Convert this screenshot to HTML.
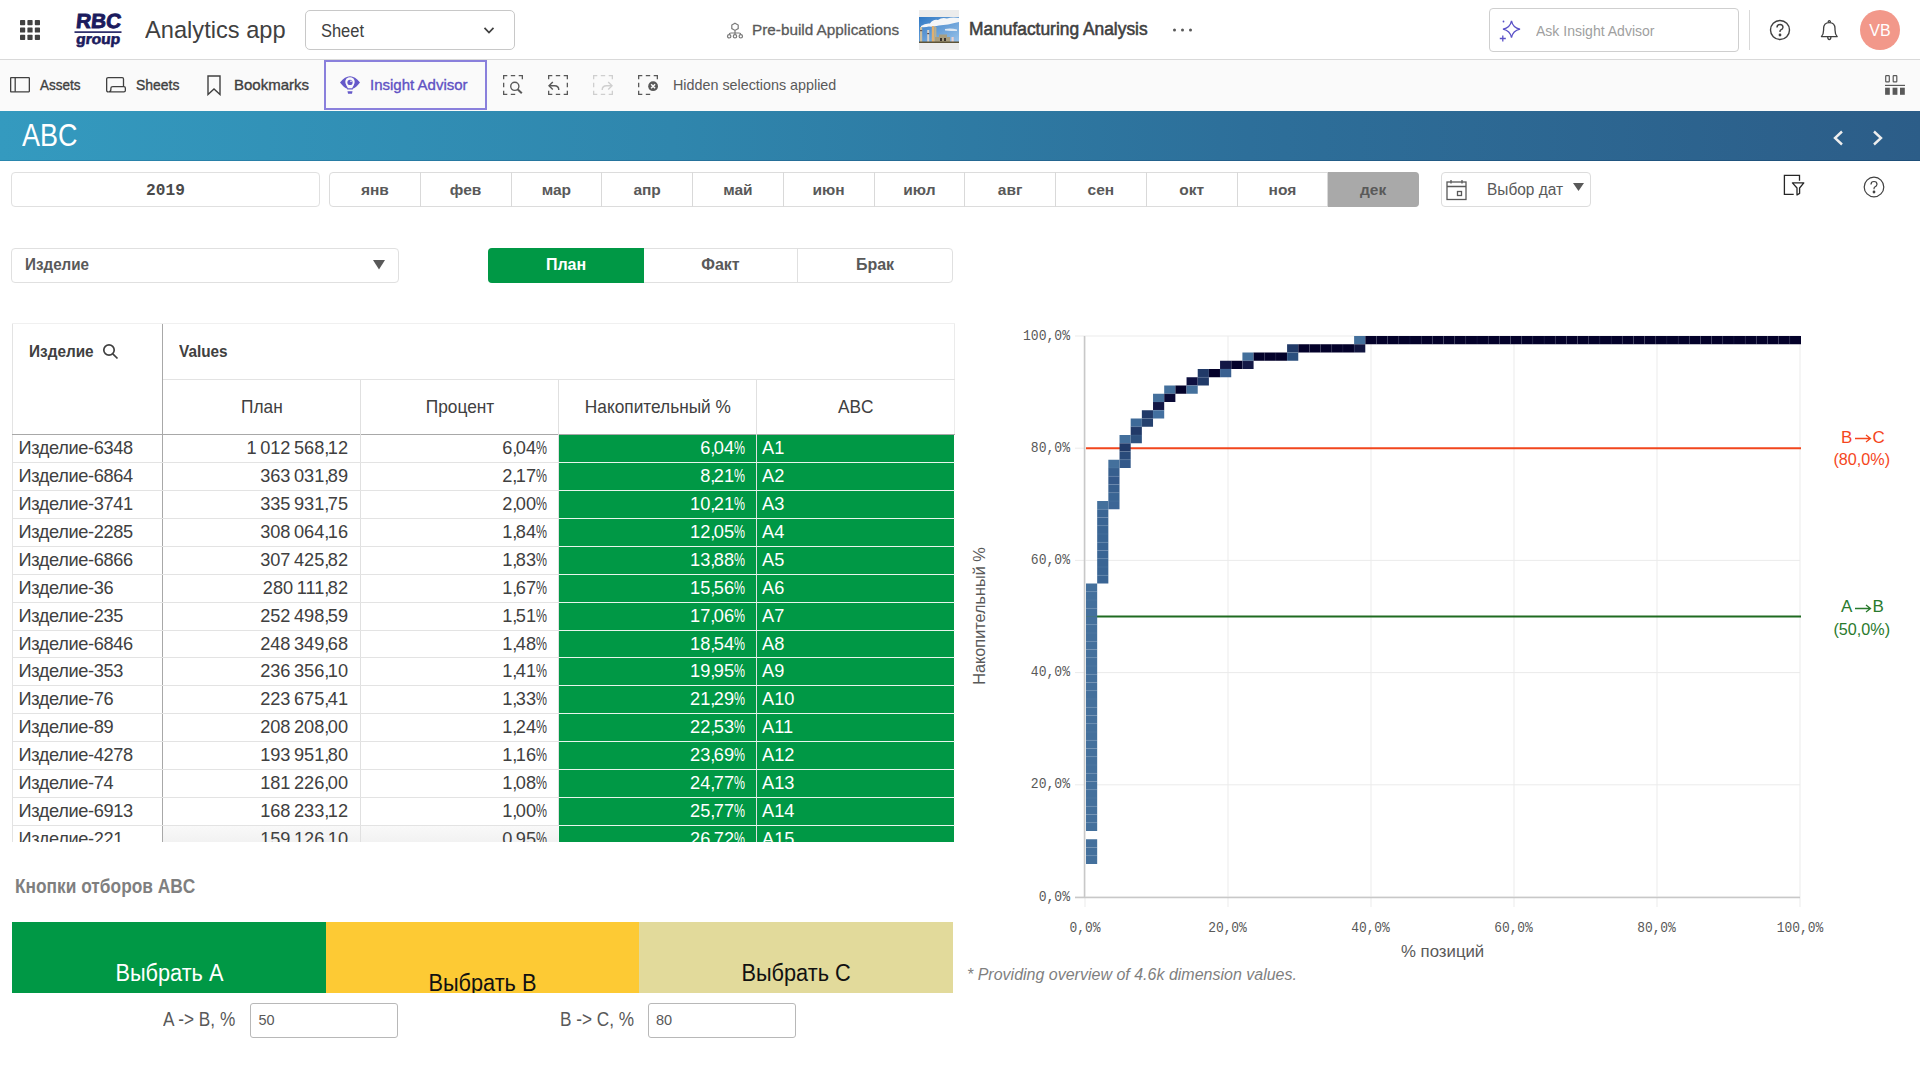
<!DOCTYPE html>
<html><head><meta charset="utf-8"><title>ABC</title>
<style>
*{box-sizing:border-box;margin:0;padding:0}
html,body{width:1920px;height:1080px;overflow:hidden;background:#fff;font-family:"Liberation Sans",sans-serif;color:#404040}
.abs{position:absolute}
#top{position:absolute;left:0;top:0;width:1920px;height:60px;background:#fff;border-bottom:1px solid #d9d9d9}
#tb{position:absolute;left:0;top:60px;width:1920px;height:51px;background:#fafafa}
#hdr{position:absolute;left:0;top:111px;width:1920px;height:50px;background:linear-gradient(90deg,#349abf 0%,#2f86ad 35%,#2d6f9a 65%,#2c5d88 100%);}
.t{position:absolute;white-space:nowrap}
</style></head><body>

<div id="top">
<svg class="abs" style="left:20px;top:20px" width="20" height="20" viewBox="0 0 20 20" fill="#404040">
<rect x="0.0" y="0.0" width="5.2" height="5.2" rx="0.7"/>
<rect x="7.4" y="0.0" width="5.2" height="5.2" rx="0.7"/>
<rect x="14.8" y="0.0" width="5.2" height="5.2" rx="0.7"/>
<rect x="0.0" y="7.4" width="5.2" height="5.2" rx="0.7"/>
<rect x="7.4" y="7.4" width="5.2" height="5.2" rx="0.7"/>
<rect x="14.8" y="7.4" width="5.2" height="5.2" rx="0.7"/>
<rect x="0.0" y="14.8" width="5.2" height="5.2" rx="0.7"/>
<rect x="7.4" y="14.8" width="5.2" height="5.2" rx="0.7"/>
<rect x="14.8" y="14.8" width="5.2" height="5.2" rx="0.7"/>
</svg>
<svg class="abs" style="left:73px;top:12px" width="50" height="36" viewBox="0 0 50 36">
<text transform="translate(1.6,0) skewX(-6)" x="25" y="16.2" text-anchor="middle" font-family="Liberation Sans" font-weight="bold" font-size="20.5" fill="#1b1b5e" stroke="#1b1b5e" stroke-width="0.9" textLength="45" lengthAdjust="spacingAndGlyphs">RBC</text>
<rect x="1.5" y="19.3" width="47" height="1.6" fill="#1b1b5e"/>
<text transform="translate(3.2,0) skewX(-6)" x="25" y="32.3" text-anchor="middle" font-family="Liberation Sans" font-weight="bold" font-size="14.5" fill="#1b1b5e" stroke="#1b1b5e" stroke-width="0.6" textLength="44" lengthAdjust="spacingAndGlyphs">group</text>
</svg>
<div class="t" style="left:145px;top:16px;font-size:24.5px;color:#404040;transform:scaleX(0.965);transform-origin:left top">Analytics app</div>
<div class="abs" style="left:305px;top:10px;width:210px;height:40px;border:1px solid #c8c8c8;border-radius:5px"></div>
<div class="t" style="left:321px;top:20px;font-size:18.3px;color:#404040;transform:scaleX(0.9);transform-origin:left top">Sheet</div>
<svg class="abs" style="left:483px;top:26px" width="12" height="10" viewBox="0 0 12 10"><path d="M1.5 1.8 L6 6.6 L10.5 1.8" stroke="#404040" stroke-width="1.7" fill="none"/></svg>
<svg class="abs" style="left:726px;top:22px" width="18" height="18" viewBox="0 0 18 18" fill="none" stroke="#7a7a7a" stroke-width="1.2">
<path d="M9 1.2 L12.2 3 V6.6 L9 8.4 L5.8 6.6 V3 Z"/><path d="M9 8.4 V11 M3.2 12.5 Q3.2 11 5 11 H13 Q14.8 11 14.8 12.5 M9 11 V12.5"/><circle cx="3.2" cy="14.3" r="1.7"/><circle cx="9" cy="14.3" r="1.7"/><circle cx="14.8" cy="14.3" r="1.7"/></svg>
<div class="t" style="left:752px;top:21px;font-size:15.3px;color:#595959;-webkit-text-stroke:0.3px #595959">Pre-build Applications</div>
<svg class="abs" style="left:919px;top:10px" width="40" height="40" viewBox="0 0 40 40">
<defs><linearGradient id="sky" x1="0" y1="0" x2="1" y2="1"><stop offset="0" stop-color="#2f78c4"/><stop offset="1" stop-color="#9cc4ea"/></linearGradient></defs>
<rect width="40" height="40" fill="#ececec"/>
<rect x="0" y="7" width="40" height="26" fill="url(#sky)"/>
<path d="M2 16 Q6 13 11 13.5 Q14 9 19 10 Q23 7 28 8.5 Q33 7 40 8 V12 Q34 13 29 14.5 Q24 15 20 15.5 Q15 17 10 16.5 Q6 17.5 2 17 Z" fill="#f4f6f8"/>
<path d="M26 19 Q32 18 38 19.5 V21 Q32 21 26 20.5 Z" fill="#dfe8f2"/>
<rect x="1" y="17" width="2.2" height="16" fill="#c9bea0"/><rect x="1" y="20" width="2.2" height="1.2" fill="#6a5a50"/>
<rect x="8.2" y="20" width="2" height="13" fill="#d8d2c8"/><rect x="8.2" y="23" width="2" height="1.2" fill="#5a4a4a"/>
<rect x="12.8" y="16" width="2.6" height="17" fill="#e0b070"/><rect x="15.4" y="17" width="2" height="15" fill="#b8b090"/>
<path d="M16 33 V27 H20 V24.5 H28 V27 H31 V33 Z" fill="#a89e80"/><rect x="21" y="28" width="2" height="3" fill="#3a3530"/><rect x="25" y="28" width="2" height="3" fill="#3a3530"/>
<rect x="32.5" y="27" width="2.2" height="5" fill="#e8d0d0"/>
<rect x="0" y="31.5" width="40" height="1.5" fill="#5e5438"/>
</svg>
<div class="t" style="left:969px;top:19px;font-size:18px;color:#404040;-webkit-text-stroke:0.55px #404040;transform:scaleX(0.965);transform-origin:left top">Manufacturing Analysis</div>
<svg class="abs" style="left:1170px;top:26px" width="26" height="8" viewBox="0 0 26 8" fill="#595959"><circle cx="4.5" cy="4" r="1.5"/><circle cx="12.5" cy="4" r="1.5"/><circle cx="20.5" cy="4" r="1.5"/></svg>
<div class="abs" style="left:1489px;top:8px;width:250px;height:44px;border:1px solid #cfcfcf;border-radius:4px"></div>
<svg class="abs" style="left:1498px;top:17px" width="26" height="26" viewBox="0 0 26 26" fill="none" stroke="#5b52c8" stroke-width="1.3">
<path d="M13.5 3.8 Q14.8 10.6 22 12.2 Q14.8 13.8 13.5 20.6 Q12.2 13.8 5 12.2 Q12.2 10.6 13.5 3.8 Z"/><path d="M4.8 18.5 V24.5 M1.8 21.5 H7.8"/><circle cx="5.5" cy="4.5" r="0.9" fill="#5b52c8" stroke="none"/></svg>
<div class="t" style="left:1536px;top:22px;font-size:15px;color:#a0a0a0;transform:scaleX(0.935);transform-origin:left top">Ask Insight Advisor</div>
<div class="abs" style="left:1749px;top:10px;width:1px;height:40px;background:#d9d9d9"></div>
<svg class="abs" style="left:1769px;top:19px" width="22" height="22" viewBox="0 0 22 22" fill="none" stroke="#404040" stroke-width="1.4"><circle cx="11" cy="11" r="9.5"/><path d="M8 8.5 Q8 5.5 11 5.5 Q14 5.5 14 8.3 Q14 10 11.5 11.2 Q11 11.5 11 13"/><circle cx="11" cy="16" r="0.7" fill="#404040"/></svg>
<svg class="abs" style="left:1819px;top:19px" width="21" height="22" viewBox="0 0 21 22" fill="none" stroke="#404040" stroke-width="1.3"><path d="M2.4 17.6 Q4.6 15.2 4.6 11 V9.6 Q4.6 3.6 10.3 3.6 Q16 3.6 16 9.6 V11 Q16 15.2 18.2 17.6 Z" stroke-linejoin="round"/><path d="M9.3 3.6 V2.3 Q10.3 0.9 11.3 2.3 V3.6"/><path d="M8.7 17.8 Q8.7 20.6 10.3 20.6 Q11.9 20.6 11.9 17.8"/></svg>
<div class="abs" style="left:1860px;top:10px;width:40px;height:40px;border-radius:50%;background:#f2988a"></div>
<div class="t" style="left:1860px;top:21.5px;width:40px;text-align:center;font-size:16px;color:#fff">VB</div>
</div>
<div id="tb">
<svg class="abs" style="left:10px;top:17px" width="20" height="16" viewBox="0 0 20 16" fill="none" stroke="#404040" stroke-width="1.3"><rect x="0.65" y="0.65" width="18.7" height="14.2" rx="0.5"/><path d="M5.2 0.65 V14.85"/></svg>
<div class="t" style="left:40px;top:16px;font-size:15px;color:#404040;-webkit-text-stroke:0.35px #404040;transform:scaleX(0.9);transform-origin:left top">Assets</div>
<svg class="abs" style="left:106px;top:17px" width="20" height="16" viewBox="0 0 20 16" fill="none" stroke="#404040" stroke-width="1.3"><path d="M2.3 14.85 Q0.65 14.85 0.65 13.2 V2.2 Q0.65 0.65 2.2 0.65 H16.3 Q17.5 0.65 17.5 1.9 V9.6"/><path d="M6.8 9.6 H17.9 Q19.35 9.6 19.35 11.1 V13.4 Q19.35 14.85 17.9 14.85 H2.3 Q4.9 14.85 4.9 12.2 V11.1 Q4.9 9.6 6.8 9.6 Z"/></svg>
<div class="t" style="left:136px;top:16px;font-size:15px;color:#404040;-webkit-text-stroke:0.35px #404040;transform:scaleX(0.93);transform-origin:left top">Sheets</div>
<svg class="abs" style="left:207px;top:15px" width="14" height="21" viewBox="0 0 14 21" fill="none" stroke="#404040" stroke-width="1.4"><path d="M1 1 H13 V19.5 L7 14 L1 19.5 Z"/></svg>
<div class="t" style="left:234px;top:16px;font-size:15px;color:#404040;-webkit-text-stroke:0.35px #404040">Bookmarks</div>
<div class="abs" style="left:324px;top:0px;width:163px;height:50px;border:2px solid #8a80dc"></div>
<svg class="abs" style="left:339px;top:16px" width="22" height="20" viewBox="0 0 22 20">
<path d="M1 6.4 Q11 -6 21 6.4 Q17 11.5 13.8 12.8 V13.6 H8.2 V12.8 Q5 11.5 1 6.4 Z" fill="#6558c9"/>
<circle cx="11" cy="5.9" r="4.7" fill="#fafafa"/><path d="M6.9 8.2 L8.9 12.3 H13.1 L15.1 8.2 Z" fill="#fafafa"/>
<circle cx="11" cy="6.4" r="2.6" fill="#6558c9"/><circle cx="12" cy="5.3" r="0.8" fill="#fafafa"/>
<path d="M8.5 15.2 H13.5 L13 17.8 H9 Z" fill="#6558c9"/></svg>
<div class="t" style="left:370px;top:16px;font-size:15px;color:#6052c4;-webkit-text-stroke:0.35px #6052c4">Insight Advisor</div>
<svg class="abs" style="left:503px;top:15px" width="20" height="20" viewBox="0 0 20 20" fill="none" stroke="#595959" stroke-width="1.3"><path d="M0.65 4.3 V0.65 H4.3 M15.7 0.65 H19.35 V4.3 M4.3 19.35 H0.65 V15.7 M7.8 0.65 H12.2 M12.2 19.35 H7.8 M0.65 12.2 V7.8"/><circle cx="11.8" cy="11.3" r="4.1" stroke-width="1.4"/><path d="M14.8 14.4 L18.8 18.2" stroke-width="2"/></svg>
<svg class="abs" style="left:548px;top:15px" width="20" height="20" viewBox="0 0 20 20" fill="none" stroke="#595959" stroke-width="1.3"><path d="M0.65 4.3 V0.65 H4.3 M15.7 0.65 H19.35 V4.3 M19.35 15.7 V19.35 H15.7 M4.3 19.35 H0.65 V15.7 M7.8 0.65 H12.2 M19.35 7.8 V12.2 M12.2 19.35 H7.8"/><path d="M1.2 10.7 H6.5 Q10.8 10.7 10.8 15" stroke-width="1.4"/><path d="M4.8 6.9 L1 10.7 L4.8 14.5" stroke-width="1.4"/></svg>
<svg class="abs" style="left:593px;top:15px" width="20" height="20" viewBox="0 0 20 20" fill="none" stroke="#cfcfcf" stroke-width="1.3"><path d="M0.65 4.3 V0.65 H4.3 M15.7 0.65 H19.35 V4.3 M19.35 15.7 V19.35 H15.7 M4.3 19.35 H0.65 V15.7 M7.8 0.65 H12.2 M12.2 19.35 H7.8 M0.65 12.2 V7.8"/><path d="M18.8 10.7 H13.5 Q9.2 10.7 9.2 15" stroke-width="1.4"/><path d="M15.2 6.9 L19 10.7 L15.2 14.5" stroke-width="1.4"/></svg>
<svg class="abs" style="left:638px;top:15px" width="20" height="20" viewBox="0 0 20 20" fill="none" stroke="#595959" stroke-width="1.3"><path d="M0.65 4.3 V0.65 H4.3 M15.7 0.65 H19.35 V4.3 M4.3 19.35 H0.65 V15.7 M7.8 0.65 H12.2 M12.2 19.35 H7.8 M0.65 12.2 V7.8"/><circle cx="15.1" cy="11.2" r="4.9" fill="#595959" stroke="none"/><path d="M13.1 9.2 L17.1 13.2 M17.1 9.2 L13.1 13.2" stroke="#fafafa" stroke-width="1.5"/></svg>
<div class="t" style="left:673px;top:16px;font-size:15px;color:#595959;transform:scaleX(0.955);transform-origin:left top">Hidden selections applied</div>
<svg class="abs" style="left:1884px;top:15px" width="22" height="21" viewBox="0 0 22 21" fill="#595959"><rect x="1.7" y="0.6" width="3.6" height="6.2" rx="0.6" fill="none" stroke="#595959" stroke-width="1.2"/><rect x="9.2" y="0.6" width="3.6" height="6.2" rx="0.6" fill="none" stroke="#595959" stroke-width="1.2"/><rect x="1" y="9.8" width="20" height="1.2"/><rect x="1.1" y="12.7" width="4.7" height="7.1"/><rect x="8.6" y="12.7" width="4.8" height="7.1"/><rect x="16" y="12.7" width="4.8" height="7.1"/></svg>
</div>
<div id="hdr">
<div class="abs" style="left:0;top:49px;width:1920px;height:1px;background:linear-gradient(90deg,#2a87ae,#26739c 35%,#235f8a 65%,#1e4e78)"></div>
<div class="t" style="left:22px;top:7px;font-size:30.5px;color:#fff;transform:scaleX(0.885);transform-origin:left top">ABC</div>
<svg class="abs" style="left:1831px;top:19px" width="14" height="16" viewBox="0 0 14 16"><path d="M11 1.5 L4 8 L11 14.5" stroke="#eee" stroke-width="2.4" fill="none"/></svg>
<svg class="abs" style="left:1871px;top:19px" width="14" height="16" viewBox="0 0 14 16"><path d="M3 1.5 L10 8 L3 14.5" stroke="#eee" stroke-width="2.4" fill="none"/></svg>
</div>
<div class="abs" style="left:11px;top:172px;width:309px;height:35px;border:1px solid #e0e0e0;border-radius:4px"></div>
<div class="t" style="left:11px;top:181px;width:309px;text-align:center;font-family:'Liberation Mono';font-weight:bold;font-size:17px;color:#4a4a4a;transform:scaleX(0.95)">2019</div>
<div class="abs" style="left:329px;top:172px;width:1090px;height:35px;border:1px solid #dcdcdc;border-radius:4px"></div>
<div class="t" style="left:329.50px;top:181px;width:90.75px;text-align:center;font-weight:bold;font-size:15.5px;color:#595959">янв</div>
<div class="abs" style="left:419.75px;top:172px;width:1px;height:35px;background:#d9d9d9"></div>
<div class="t" style="left:420.25px;top:181px;width:90.75px;text-align:center;font-weight:bold;font-size:15.5px;color:#595959">фев</div>
<div class="abs" style="left:510.50px;top:172px;width:1px;height:35px;background:#d9d9d9"></div>
<div class="t" style="left:511.00px;top:181px;width:90.75px;text-align:center;font-weight:bold;font-size:15.5px;color:#595959">мар</div>
<div class="abs" style="left:601.25px;top:172px;width:1px;height:35px;background:#d9d9d9"></div>
<div class="t" style="left:601.75px;top:181px;width:90.75px;text-align:center;font-weight:bold;font-size:15.5px;color:#595959">апр</div>
<div class="abs" style="left:692.00px;top:172px;width:1px;height:35px;background:#d9d9d9"></div>
<div class="t" style="left:692.50px;top:181px;width:90.75px;text-align:center;font-weight:bold;font-size:15.5px;color:#595959">май</div>
<div class="abs" style="left:782.75px;top:172px;width:1px;height:35px;background:#d9d9d9"></div>
<div class="t" style="left:783.25px;top:181px;width:90.75px;text-align:center;font-weight:bold;font-size:15.5px;color:#595959">июн</div>
<div class="abs" style="left:873.50px;top:172px;width:1px;height:35px;background:#d9d9d9"></div>
<div class="t" style="left:874.00px;top:181px;width:90.75px;text-align:center;font-weight:bold;font-size:15.5px;color:#595959">июл</div>
<div class="abs" style="left:964.25px;top:172px;width:1px;height:35px;background:#d9d9d9"></div>
<div class="t" style="left:964.75px;top:181px;width:90.75px;text-align:center;font-weight:bold;font-size:15.5px;color:#595959">авг</div>
<div class="abs" style="left:1055.00px;top:172px;width:1px;height:35px;background:#d9d9d9"></div>
<div class="t" style="left:1055.50px;top:181px;width:90.75px;text-align:center;font-weight:bold;font-size:15.5px;color:#595959">сен</div>
<div class="abs" style="left:1145.75px;top:172px;width:1px;height:35px;background:#d9d9d9"></div>
<div class="t" style="left:1146.25px;top:181px;width:90.75px;text-align:center;font-weight:bold;font-size:15.5px;color:#595959">окт</div>
<div class="abs" style="left:1236.50px;top:172px;width:1px;height:35px;background:#d9d9d9"></div>
<div class="t" style="left:1237.00px;top:181px;width:90.75px;text-align:center;font-weight:bold;font-size:15.5px;color:#595959">ноя</div>
<div class="abs" style="left:1327.25px;top:172px;width:1px;height:35px;background:#d9d9d9"></div>
<div class="abs" style="left:1327.75px;top:172px;width:90.75px;height:35px;background:#a9a9a9;border-radius:0 4px 4px 0"></div>
<div class="t" style="left:1327.75px;top:181px;width:90.75px;text-align:center;font-weight:bold;font-size:15.5px;color:#595959">дек</div>
<div class="abs" style="left:1441px;top:172px;width:150px;height:35px;border:1px solid #dcdcdc;border-radius:4px"></div>
<svg class="abs" style="left:1446px;top:179px" width="22" height="22" viewBox="0 0 22 22" fill="none" stroke="#595959" stroke-width="1.3"><rect x="1" y="3" width="19" height="17.5"/><path d="M1 7.5 H20 M5 1 V4.5 M16 1 V4.5"/><rect x="11.5" y="12.5" width="4" height="4"/></svg>
<div class="t" style="left:1487px;top:181px;font-size:16px;color:#595959;transform:scaleX(0.965);transform-origin:left top">Выбор дат</div>
<svg class="abs" style="left:1573px;top:183px" width="12" height="8" viewBox="0 0 12 8"><path d="M0 0 H11 L5.5 8 Z" fill="#595959"/></svg>
<svg class="abs" style="left:1783px;top:174px" width="24" height="24" viewBox="0 0 24 24" fill="none" stroke="#262626" stroke-width="1.3"><path d="M10.7 20.3 H1.4 V1.3 H16.5 V6.8"/><path d="M9.4 8.9 H20.8 L16.6 14 V19.4 L14 21 V14 Z" fill="#fff" stroke-linejoin="round"/></svg>
<svg class="abs" style="left:1863px;top:176px" width="22" height="22" viewBox="0 0 22 22" fill="none" stroke="#404040" stroke-width="1.2"><circle cx="11" cy="11" r="9.8"/><path d="M8 8.5 Q8 5.5 11 5.5 Q14 5.5 14 8.3 Q14 10 11.5 11.2 Q11 11.5 11 13.2"/><circle cx="11" cy="16" r="0.8" fill="#595959"/></svg>
<div class="abs" style="left:11px;top:248px;width:388px;height:35px;border:1px solid #e0e0e0;border-radius:4px"></div>
<div class="t" style="left:25px;top:256px;font-weight:bold;font-size:16px;color:#595959;transform:scaleX(0.95);transform-origin:left top">Изделие</div>
<svg class="abs" style="left:373px;top:260px" width="13" height="10" viewBox="0 0 13 10"><path d="M0 0 H12 L6 9.5 Z" fill="#595959"/></svg>
<div class="abs" style="left:488px;top:248px;width:465px;height:35px;border:1px solid #e0e0e0;border-radius:4px"></div>
<div class="abs" style="left:488px;top:248px;width:156px;height:35px;background:#009845;border-radius:4px 0 0 4px"></div>
<div class="abs" style="left:797px;top:248px;width:1px;height:35px;background:#e0e0e0"></div>
<div class="t" style="left:488px;top:256px;width:156px;text-align:center;font-weight:bold;font-size:16px;color:#fff">План</div>
<div class="t" style="left:644px;top:256px;width:153px;text-align:center;font-weight:bold;font-size:16px;color:#595959">Факт</div>
<div class="t" style="left:797px;top:256px;width:156px;text-align:center;font-weight:bold;font-size:16px;color:#595959">Брак</div>
<style>.nm{font-family:"Liberation Sans";font-size:18.2px}.nm i{font-style:normal;letter-spacing:-1.6px}.nm b{font-weight:normal;display:inline-block;width:11px;transform:scaleX(0.68);transform-origin:left center}</style>
<div class="abs" style="left:12px;top:323px;width:943px;height:1px;background:#f0f0f0"></div>
<div class="abs" style="left:954px;top:324px;width:1px;height:110px;background:#ebebeb"></div>
<div class="abs" style="left:12px;top:324px;width:1px;height:518px;background:#e3e3e3"></div>
<div class="abs" style="left:162px;top:324px;width:1px;height:518px;background:#a8a8a8"></div>
<div class="abs" style="left:163px;top:379px;width:792px;height:1px;background:#e3e3e3"></div>
<div class="abs" style="left:12px;top:434px;width:943px;height:1px;background:#a8a8a8"></div>
<div class="abs" style="left:360px;top:380px;width:1px;height:462px;background:#e0e0e0"></div>
<div class="abs" style="left:558px;top:380px;width:1px;height:462px;background:#e0e0e0"></div>
<div class="abs" style="left:756px;top:380px;width:1px;height:462px;background:#e0e0e0"></div>
<div class="t" style="left:29px;top:342px;font-weight:bold;font-size:16.5px;color:#404040;transform:scaleX(0.93);transform-origin:left top">Изделие</div>
<svg class="abs" style="left:102px;top:343px" width="18" height="18" viewBox="0 0 18 18" fill="none" stroke="#404040" stroke-width="1.7"><circle cx="7" cy="7" r="5.2"/><path d="M10.8 10.8 L15.5 15.5"/></svg>
<div class="t" style="left:179px;top:342px;font-weight:bold;font-size:16.5px;color:#404040;transform:scaleX(0.93);transform-origin:left top">Values</div>
<div class="t" style="left:163px;top:396.5px;width:198px;text-align:center;font-size:18.2px;color:#404040"><span style="display:inline-block;transform:scaleX(0.95)">План</span></div>
<div class="t" style="left:361px;top:396.5px;width:198px;text-align:center;font-size:18.2px;color:#404040"><span style="display:inline-block;transform:scaleX(0.95)">Процент</span></div>
<div class="t" style="left:559px;top:396.5px;width:198px;text-align:center;font-size:18.2px;color:#404040"><span style="display:inline-block;transform:scaleX(0.95)">Накопительный %</span></div>
<div class="t" style="left:757px;top:396.5px;width:198px;text-align:center;font-size:18.2px;color:#404040"><span style="display:inline-block;transform:scaleX(0.95)">ABC</span></div>
<div class="abs" style="left:12px;top:435px;width:943px;height:407px;overflow:hidden">
<div class="abs" style="left:547px;top:0.00px;width:197px;height:26.93px;background:#009845"></div>
<div class="abs" style="left:745px;top:0.00px;width:197px;height:26.93px;background:#009845"></div>
<div class="t nm" style="left:6.5px;top:3.00px;color:#404040;letter-spacing:-0.35px">Изделие-6348</div>
<div class="t nm" style="left:151px;top:3.00px;width:185px;text-align:right;color:#404040">1<i> </i>012<i> </i>568<i>,</i>12</div>
<div class="t nm" style="left:349px;top:3.00px;width:186px;text-align:right;color:#404040">6<i>,</i>04<b>%</b></div>
<div class="t nm" style="left:547px;top:3.00px;width:186px;text-align:right;color:#fff">6<i>,</i>04<b>%</b></div>
<div class="t nm" style="left:750px;top:3.00px;color:#fff">A1</div>
<div class="abs" style="left:547px;top:27.93px;width:197px;height:26.93px;background:#009845"></div>
<div class="abs" style="left:745px;top:27.93px;width:197px;height:26.93px;background:#009845"></div>
<div class="abs" style="left:1px;top:26.93px;width:546px;height:1px;background:#e3e3e3"></div>
<div class="abs" style="left:547px;top:26.93px;width:396px;height:1px;background:#e8f5ec"></div>
<div class="t nm" style="left:6.5px;top:30.93px;color:#404040;letter-spacing:-0.35px">Изделие-6864</div>
<div class="t nm" style="left:151px;top:30.93px;width:185px;text-align:right;color:#404040">363<i> </i>031<i>,</i>89</div>
<div class="t nm" style="left:349px;top:30.93px;width:186px;text-align:right;color:#404040">2<i>,</i>17<b>%</b></div>
<div class="t nm" style="left:547px;top:30.93px;width:186px;text-align:right;color:#fff">8<i>,</i>21<b>%</b></div>
<div class="t nm" style="left:750px;top:30.93px;color:#fff">A2</div>
<div class="abs" style="left:547px;top:55.86px;width:197px;height:26.93px;background:#009845"></div>
<div class="abs" style="left:745px;top:55.86px;width:197px;height:26.93px;background:#009845"></div>
<div class="abs" style="left:1px;top:54.86px;width:546px;height:1px;background:#e3e3e3"></div>
<div class="abs" style="left:547px;top:54.86px;width:396px;height:1px;background:#e8f5ec"></div>
<div class="t nm" style="left:6.5px;top:58.86px;color:#404040;letter-spacing:-0.35px">Изделие-3741</div>
<div class="t nm" style="left:151px;top:58.86px;width:185px;text-align:right;color:#404040">335<i> </i>931<i>,</i>75</div>
<div class="t nm" style="left:349px;top:58.86px;width:186px;text-align:right;color:#404040">2<i>,</i>00<b>%</b></div>
<div class="t nm" style="left:547px;top:58.86px;width:186px;text-align:right;color:#fff">10<i>,</i>21<b>%</b></div>
<div class="t nm" style="left:750px;top:58.86px;color:#fff">A3</div>
<div class="abs" style="left:547px;top:83.79px;width:197px;height:26.93px;background:#009845"></div>
<div class="abs" style="left:745px;top:83.79px;width:197px;height:26.93px;background:#009845"></div>
<div class="abs" style="left:1px;top:82.79px;width:546px;height:1px;background:#e3e3e3"></div>
<div class="abs" style="left:547px;top:82.79px;width:396px;height:1px;background:#e8f5ec"></div>
<div class="t nm" style="left:6.5px;top:86.79px;color:#404040;letter-spacing:-0.35px">Изделие-2285</div>
<div class="t nm" style="left:151px;top:86.79px;width:185px;text-align:right;color:#404040">308<i> </i>064<i>,</i>16</div>
<div class="t nm" style="left:349px;top:86.79px;width:186px;text-align:right;color:#404040">1<i>,</i>84<b>%</b></div>
<div class="t nm" style="left:547px;top:86.79px;width:186px;text-align:right;color:#fff">12<i>,</i>05<b>%</b></div>
<div class="t nm" style="left:750px;top:86.79px;color:#fff">A4</div>
<div class="abs" style="left:547px;top:111.72px;width:197px;height:26.93px;background:#009845"></div>
<div class="abs" style="left:745px;top:111.72px;width:197px;height:26.93px;background:#009845"></div>
<div class="abs" style="left:1px;top:110.72px;width:546px;height:1px;background:#e3e3e3"></div>
<div class="abs" style="left:547px;top:110.72px;width:396px;height:1px;background:#e8f5ec"></div>
<div class="t nm" style="left:6.5px;top:114.72px;color:#404040;letter-spacing:-0.35px">Изделие-6866</div>
<div class="t nm" style="left:151px;top:114.72px;width:185px;text-align:right;color:#404040">307<i> </i>425<i>,</i>82</div>
<div class="t nm" style="left:349px;top:114.72px;width:186px;text-align:right;color:#404040">1<i>,</i>83<b>%</b></div>
<div class="t nm" style="left:547px;top:114.72px;width:186px;text-align:right;color:#fff">13<i>,</i>88<b>%</b></div>
<div class="t nm" style="left:750px;top:114.72px;color:#fff">A5</div>
<div class="abs" style="left:547px;top:139.65px;width:197px;height:26.93px;background:#009845"></div>
<div class="abs" style="left:745px;top:139.65px;width:197px;height:26.93px;background:#009845"></div>
<div class="abs" style="left:1px;top:138.65px;width:546px;height:1px;background:#e3e3e3"></div>
<div class="abs" style="left:547px;top:138.65px;width:396px;height:1px;background:#e8f5ec"></div>
<div class="t nm" style="left:6.5px;top:142.65px;color:#404040;letter-spacing:-0.35px">Изделие-36</div>
<div class="t nm" style="left:151px;top:142.65px;width:185px;text-align:right;color:#404040">280<i> </i>111<i>,</i>82</div>
<div class="t nm" style="left:349px;top:142.65px;width:186px;text-align:right;color:#404040">1<i>,</i>67<b>%</b></div>
<div class="t nm" style="left:547px;top:142.65px;width:186px;text-align:right;color:#fff">15<i>,</i>56<b>%</b></div>
<div class="t nm" style="left:750px;top:142.65px;color:#fff">A6</div>
<div class="abs" style="left:547px;top:167.58px;width:197px;height:26.93px;background:#009845"></div>
<div class="abs" style="left:745px;top:167.58px;width:197px;height:26.93px;background:#009845"></div>
<div class="abs" style="left:1px;top:166.58px;width:546px;height:1px;background:#e3e3e3"></div>
<div class="abs" style="left:547px;top:166.58px;width:396px;height:1px;background:#e8f5ec"></div>
<div class="t nm" style="left:6.5px;top:170.58px;color:#404040;letter-spacing:-0.35px">Изделие-235</div>
<div class="t nm" style="left:151px;top:170.58px;width:185px;text-align:right;color:#404040">252<i> </i>498<i>,</i>59</div>
<div class="t nm" style="left:349px;top:170.58px;width:186px;text-align:right;color:#404040">1<i>,</i>51<b>%</b></div>
<div class="t nm" style="left:547px;top:170.58px;width:186px;text-align:right;color:#fff">17<i>,</i>06<b>%</b></div>
<div class="t nm" style="left:750px;top:170.58px;color:#fff">A7</div>
<div class="abs" style="left:547px;top:195.51px;width:197px;height:26.93px;background:#009845"></div>
<div class="abs" style="left:745px;top:195.51px;width:197px;height:26.93px;background:#009845"></div>
<div class="abs" style="left:1px;top:194.51px;width:546px;height:1px;background:#e3e3e3"></div>
<div class="abs" style="left:547px;top:194.51px;width:396px;height:1px;background:#e8f5ec"></div>
<div class="t nm" style="left:6.5px;top:198.51px;color:#404040;letter-spacing:-0.35px">Изделие-6846</div>
<div class="t nm" style="left:151px;top:198.51px;width:185px;text-align:right;color:#404040">248<i> </i>349<i>,</i>68</div>
<div class="t nm" style="left:349px;top:198.51px;width:186px;text-align:right;color:#404040">1<i>,</i>48<b>%</b></div>
<div class="t nm" style="left:547px;top:198.51px;width:186px;text-align:right;color:#fff">18<i>,</i>54<b>%</b></div>
<div class="t nm" style="left:750px;top:198.51px;color:#fff">A8</div>
<div class="abs" style="left:547px;top:223.44px;width:197px;height:26.93px;background:#009845"></div>
<div class="abs" style="left:745px;top:223.44px;width:197px;height:26.93px;background:#009845"></div>
<div class="abs" style="left:1px;top:222.44px;width:546px;height:1px;background:#e3e3e3"></div>
<div class="abs" style="left:547px;top:222.44px;width:396px;height:1px;background:#e8f5ec"></div>
<div class="t nm" style="left:6.5px;top:226.44px;color:#404040;letter-spacing:-0.35px">Изделие-353</div>
<div class="t nm" style="left:151px;top:226.44px;width:185px;text-align:right;color:#404040">236<i> </i>356<i>,</i>10</div>
<div class="t nm" style="left:349px;top:226.44px;width:186px;text-align:right;color:#404040">1<i>,</i>41<b>%</b></div>
<div class="t nm" style="left:547px;top:226.44px;width:186px;text-align:right;color:#fff">19<i>,</i>95<b>%</b></div>
<div class="t nm" style="left:750px;top:226.44px;color:#fff">A9</div>
<div class="abs" style="left:547px;top:251.37px;width:197px;height:26.93px;background:#009845"></div>
<div class="abs" style="left:745px;top:251.37px;width:197px;height:26.93px;background:#009845"></div>
<div class="abs" style="left:1px;top:250.37px;width:546px;height:1px;background:#e3e3e3"></div>
<div class="abs" style="left:547px;top:250.37px;width:396px;height:1px;background:#e8f5ec"></div>
<div class="t nm" style="left:6.5px;top:254.37px;color:#404040;letter-spacing:-0.35px">Изделие-76</div>
<div class="t nm" style="left:151px;top:254.37px;width:185px;text-align:right;color:#404040">223<i> </i>675<i>,</i>41</div>
<div class="t nm" style="left:349px;top:254.37px;width:186px;text-align:right;color:#404040">1<i>,</i>33<b>%</b></div>
<div class="t nm" style="left:547px;top:254.37px;width:186px;text-align:right;color:#fff">21<i>,</i>29<b>%</b></div>
<div class="t nm" style="left:750px;top:254.37px;color:#fff">A10</div>
<div class="abs" style="left:547px;top:279.30px;width:197px;height:26.93px;background:#009845"></div>
<div class="abs" style="left:745px;top:279.30px;width:197px;height:26.93px;background:#009845"></div>
<div class="abs" style="left:1px;top:278.30px;width:546px;height:1px;background:#e3e3e3"></div>
<div class="abs" style="left:547px;top:278.30px;width:396px;height:1px;background:#e8f5ec"></div>
<div class="t nm" style="left:6.5px;top:282.30px;color:#404040;letter-spacing:-0.35px">Изделие-89</div>
<div class="t nm" style="left:151px;top:282.30px;width:185px;text-align:right;color:#404040">208<i> </i>208<i>,</i>00</div>
<div class="t nm" style="left:349px;top:282.30px;width:186px;text-align:right;color:#404040">1<i>,</i>24<b>%</b></div>
<div class="t nm" style="left:547px;top:282.30px;width:186px;text-align:right;color:#fff">22<i>,</i>53<b>%</b></div>
<div class="t nm" style="left:750px;top:282.30px;color:#fff">A11</div>
<div class="abs" style="left:547px;top:307.23px;width:197px;height:26.93px;background:#009845"></div>
<div class="abs" style="left:745px;top:307.23px;width:197px;height:26.93px;background:#009845"></div>
<div class="abs" style="left:1px;top:306.23px;width:546px;height:1px;background:#e3e3e3"></div>
<div class="abs" style="left:547px;top:306.23px;width:396px;height:1px;background:#e8f5ec"></div>
<div class="t nm" style="left:6.5px;top:310.23px;color:#404040;letter-spacing:-0.35px">Изделие-4278</div>
<div class="t nm" style="left:151px;top:310.23px;width:185px;text-align:right;color:#404040">193<i> </i>951<i>,</i>80</div>
<div class="t nm" style="left:349px;top:310.23px;width:186px;text-align:right;color:#404040">1<i>,</i>16<b>%</b></div>
<div class="t nm" style="left:547px;top:310.23px;width:186px;text-align:right;color:#fff">23<i>,</i>69<b>%</b></div>
<div class="t nm" style="left:750px;top:310.23px;color:#fff">A12</div>
<div class="abs" style="left:547px;top:335.16px;width:197px;height:26.93px;background:#009845"></div>
<div class="abs" style="left:745px;top:335.16px;width:197px;height:26.93px;background:#009845"></div>
<div class="abs" style="left:1px;top:334.16px;width:546px;height:1px;background:#e3e3e3"></div>
<div class="abs" style="left:547px;top:334.16px;width:396px;height:1px;background:#e8f5ec"></div>
<div class="t nm" style="left:6.5px;top:338.16px;color:#404040;letter-spacing:-0.35px">Изделие-74</div>
<div class="t nm" style="left:151px;top:338.16px;width:185px;text-align:right;color:#404040">181<i> </i>226<i>,</i>00</div>
<div class="t nm" style="left:349px;top:338.16px;width:186px;text-align:right;color:#404040">1<i>,</i>08<b>%</b></div>
<div class="t nm" style="left:547px;top:338.16px;width:186px;text-align:right;color:#fff">24<i>,</i>77<b>%</b></div>
<div class="t nm" style="left:750px;top:338.16px;color:#fff">A13</div>
<div class="abs" style="left:547px;top:363.09px;width:197px;height:26.93px;background:#009845"></div>
<div class="abs" style="left:745px;top:363.09px;width:197px;height:26.93px;background:#009845"></div>
<div class="abs" style="left:1px;top:362.09px;width:546px;height:1px;background:#e3e3e3"></div>
<div class="abs" style="left:547px;top:362.09px;width:396px;height:1px;background:#e8f5ec"></div>
<div class="t nm" style="left:6.5px;top:366.09px;color:#404040;letter-spacing:-0.35px">Изделие-6913</div>
<div class="t nm" style="left:151px;top:366.09px;width:185px;text-align:right;color:#404040">168<i> </i>233<i>,</i>12</div>
<div class="t nm" style="left:349px;top:366.09px;width:186px;text-align:right;color:#404040">1<i>,</i>00<b>%</b></div>
<div class="t nm" style="left:547px;top:366.09px;width:186px;text-align:right;color:#fff">25<i>,</i>77<b>%</b></div>
<div class="t nm" style="left:750px;top:366.09px;color:#fff">A14</div>
<div class="abs" style="left:547px;top:391.02px;width:197px;height:26.93px;background:#009845"></div>
<div class="abs" style="left:745px;top:391.02px;width:197px;height:26.93px;background:#009845"></div>
<div class="abs" style="left:1px;top:390.02px;width:546px;height:1px;background:#e3e3e3"></div>
<div class="abs" style="left:547px;top:390.02px;width:396px;height:1px;background:#e8f5ec"></div>
<div class="abs" style="left:151px;top:391.02px;width:396px;height:27.93px;background:linear-gradient(#f9f9f9,#ececec)"></div>
<div class="abs" style="left:348px;top:391.02px;width:1px;height:27.93px;background:#e0e0e0"></div>
<div class="abs" style="left:150px;top:391.02px;width:1px;height:27.93px;background:#a8a8a8"></div>
<div class="t nm" style="left:6.5px;top:394.02px;color:#404040;letter-spacing:-0.35px">Изделие-221</div>
<div class="t nm" style="left:151px;top:394.02px;width:185px;text-align:right;color:#404040">159<i> </i>126<i>,</i>10</div>
<div class="t nm" style="left:349px;top:394.02px;width:186px;text-align:right;color:#404040">0<i>,</i>95<b>%</b></div>
<div class="t nm" style="left:547px;top:394.02px;width:186px;text-align:right;color:#fff">26<i>,</i>72<b>%</b></div>
<div class="t nm" style="left:750px;top:394.02px;color:#fff">A15</div>
</div>
<div class="t" style="left:15px;top:874.5px;font-weight:bold;font-size:19.7px;color:#7f7f7f;transform:scaleX(0.88);transform-origin:left top">Кнопки отборов ABC</div>
<div class="abs" style="left:12px;top:922px;width:314px;height:71px;background:#009845"></div>
<div class="abs" style="left:326px;top:922px;width:313px;height:71px;background:#fdca34"></div>
<div class="abs" style="left:639px;top:922px;width:314px;height:71px;background:#e2da9b"></div>
<div class="t" style="left:12px;top:959.5px;width:314px;text-align:center;font-size:23.5px;color:#fff"><span style="display:inline-block;transform:scaleX(0.925)">Выбрать A</span></div>
<div class="abs" style="left:326px;top:922px;width:313px;height:71px;overflow:hidden"><div class="t" style="left:0;top:48px;width:313px;text-align:center;font-size:23.5px;color:#111"><span style="display:inline-block;transform:scaleX(0.925)">Выбрать B</span></div></div>
<div class="t" style="left:639px;top:959.5px;width:314px;text-align:center;font-size:23.5px;color:#111"><span style="display:inline-block;transform:scaleX(0.925)">Выбрать C</span></div>
<div class="t" style="left:162.5px;top:1008.3px;font-size:20px;color:#595959;transform:scaleX(0.86);transform-origin:left top">A -&gt; B, %</div>
<div class="abs" style="left:250px;top:1003px;width:148px;height:35px;border:1px solid #b8b8b8;border-radius:3px"></div>
<div class="t" style="left:258.5px;top:1012px;font-size:14.5px;color:#595959">50</div>
<div class="t" style="left:559.5px;top:1008.3px;font-size:20px;color:#595959;transform:scaleX(0.86);transform-origin:left top">B -&gt; C, %</div>
<div class="abs" style="left:648px;top:1003px;width:148px;height:35px;border:1px solid #b8b8b8;border-radius:3px"></div>
<div class="t" style="left:656px;top:1012px;font-size:14.5px;color:#595959">80</div>
<svg class="abs" style="left:0;top:0" width="1920" height="1080" viewBox="0 0 1920 1080">
<line x1="1075" y1="897.0" x2="1800" y2="897.0" stroke="#ebebeb" stroke-width="1"/>
<line x1="1085.0" y1="336" x2="1085.0" y2="907" stroke="#ebebeb" stroke-width="1"/>
<line x1="1075" y1="784.8" x2="1800" y2="784.8" stroke="#ebebeb" stroke-width="1"/>
<line x1="1228.0" y1="336" x2="1228.0" y2="907" stroke="#ebebeb" stroke-width="1"/>
<line x1="1075" y1="672.6" x2="1800" y2="672.6" stroke="#ebebeb" stroke-width="1"/>
<line x1="1371.0" y1="336" x2="1371.0" y2="907" stroke="#ebebeb" stroke-width="1"/>
<line x1="1075" y1="560.4" x2="1800" y2="560.4" stroke="#ebebeb" stroke-width="1"/>
<line x1="1514.0" y1="336" x2="1514.0" y2="907" stroke="#ebebeb" stroke-width="1"/>
<line x1="1075" y1="448.2" x2="1800" y2="448.2" stroke="#ebebeb" stroke-width="1"/>
<line x1="1657.0" y1="336" x2="1657.0" y2="907" stroke="#ebebeb" stroke-width="1"/>
<line x1="1075" y1="336.0" x2="1800" y2="336.0" stroke="#ebebeb" stroke-width="1"/>
<line x1="1800.0" y1="336" x2="1800.0" y2="907" stroke="#ebebeb" stroke-width="1"/>
<line x1="1084.5" y1="336" x2="1084.5" y2="897" stroke="#c8c8c8" stroke-width="1.5"/>
<line x1="1075" y1="897.5" x2="1800" y2="897.5" stroke="#c8c8c8" stroke-width="1.5"/>
<line x1="1086" y1="448.2" x2="1801" y2="448.2" stroke="#f2461d" stroke-width="2"/>
<line x1="1086" y1="616.5" x2="1801" y2="616.5" stroke="#1f6b21" stroke-width="2"/>
<rect x="1086.00" y="583.50" width="11.17" height="8.25" fill="#44709c"/>
<rect x="1086.00" y="591.75" width="11.17" height="8.25" fill="#44709c"/>
<line x1="1086.00" y1="591.75" x2="1097.17" y2="591.75" stroke="#8fa8c8" stroke-opacity="0.2" stroke-width="0.6"/>
<rect x="1086.00" y="600.00" width="11.17" height="8.25" fill="#44709c"/>
<line x1="1086.00" y1="600.00" x2="1097.17" y2="600.00" stroke="#8fa8c8" stroke-opacity="0.2" stroke-width="0.6"/>
<rect x="1086.00" y="608.25" width="11.17" height="8.25" fill="#44709c"/>
<line x1="1086.00" y1="608.25" x2="1097.17" y2="608.25" stroke="#8fa8c8" stroke-opacity="0.2" stroke-width="0.6"/>
<rect x="1086.00" y="616.50" width="11.17" height="8.25" fill="#44709c"/>
<line x1="1086.00" y1="616.50" x2="1097.17" y2="616.50" stroke="#8fa8c8" stroke-opacity="0.2" stroke-width="0.6"/>
<rect x="1086.00" y="624.75" width="11.17" height="8.25" fill="#44709c"/>
<line x1="1086.00" y1="624.75" x2="1097.17" y2="624.75" stroke="#8fa8c8" stroke-opacity="0.2" stroke-width="0.6"/>
<rect x="1086.00" y="633.00" width="11.17" height="8.25" fill="#44709c"/>
<line x1="1086.00" y1="633.00" x2="1097.17" y2="633.00" stroke="#8fa8c8" stroke-opacity="0.2" stroke-width="0.6"/>
<rect x="1086.00" y="641.25" width="11.17" height="8.25" fill="#44709c"/>
<line x1="1086.00" y1="641.25" x2="1097.17" y2="641.25" stroke="#8fa8c8" stroke-opacity="0.2" stroke-width="0.6"/>
<rect x="1086.00" y="649.50" width="11.17" height="8.25" fill="#44709c"/>
<line x1="1086.00" y1="649.50" x2="1097.17" y2="649.50" stroke="#8fa8c8" stroke-opacity="0.2" stroke-width="0.6"/>
<rect x="1086.00" y="657.75" width="11.17" height="8.25" fill="#44709c"/>
<line x1="1086.00" y1="657.75" x2="1097.17" y2="657.75" stroke="#8fa8c8" stroke-opacity="0.2" stroke-width="0.6"/>
<rect x="1086.00" y="666.00" width="11.17" height="8.25" fill="#44709c"/>
<line x1="1086.00" y1="666.00" x2="1097.17" y2="666.00" stroke="#8fa8c8" stroke-opacity="0.2" stroke-width="0.6"/>
<rect x="1086.00" y="674.25" width="11.17" height="8.25" fill="#44709c"/>
<line x1="1086.00" y1="674.25" x2="1097.17" y2="674.25" stroke="#8fa8c8" stroke-opacity="0.2" stroke-width="0.6"/>
<rect x="1086.00" y="682.50" width="11.17" height="8.25" fill="#44709c"/>
<line x1="1086.00" y1="682.50" x2="1097.17" y2="682.50" stroke="#8fa8c8" stroke-opacity="0.2" stroke-width="0.6"/>
<rect x="1086.00" y="690.75" width="11.17" height="8.25" fill="#44709c"/>
<line x1="1086.00" y1="690.75" x2="1097.17" y2="690.75" stroke="#8fa8c8" stroke-opacity="0.2" stroke-width="0.6"/>
<rect x="1086.00" y="699.00" width="11.17" height="8.25" fill="#44709c"/>
<line x1="1086.00" y1="699.00" x2="1097.17" y2="699.00" stroke="#8fa8c8" stroke-opacity="0.2" stroke-width="0.6"/>
<rect x="1086.00" y="707.25" width="11.17" height="8.25" fill="#44709c"/>
<line x1="1086.00" y1="707.25" x2="1097.17" y2="707.25" stroke="#8fa8c8" stroke-opacity="0.2" stroke-width="0.6"/>
<rect x="1086.00" y="715.50" width="11.17" height="8.25" fill="#44709c"/>
<line x1="1086.00" y1="715.50" x2="1097.17" y2="715.50" stroke="#8fa8c8" stroke-opacity="0.2" stroke-width="0.6"/>
<rect x="1086.00" y="723.75" width="11.17" height="8.25" fill="#44709c"/>
<line x1="1086.00" y1="723.75" x2="1097.17" y2="723.75" stroke="#8fa8c8" stroke-opacity="0.2" stroke-width="0.6"/>
<rect x="1086.00" y="732.00" width="11.17" height="8.25" fill="#44709c"/>
<line x1="1086.00" y1="732.00" x2="1097.17" y2="732.00" stroke="#8fa8c8" stroke-opacity="0.2" stroke-width="0.6"/>
<rect x="1086.00" y="740.25" width="11.17" height="8.25" fill="#44709c"/>
<line x1="1086.00" y1="740.25" x2="1097.17" y2="740.25" stroke="#8fa8c8" stroke-opacity="0.2" stroke-width="0.6"/>
<rect x="1086.00" y="748.50" width="11.17" height="8.25" fill="#44709c"/>
<line x1="1086.00" y1="748.50" x2="1097.17" y2="748.50" stroke="#8fa8c8" stroke-opacity="0.2" stroke-width="0.6"/>
<rect x="1086.00" y="756.75" width="11.17" height="8.25" fill="#44709c"/>
<line x1="1086.00" y1="756.75" x2="1097.17" y2="756.75" stroke="#8fa8c8" stroke-opacity="0.2" stroke-width="0.6"/>
<rect x="1086.00" y="765.00" width="11.17" height="8.25" fill="#44709c"/>
<line x1="1086.00" y1="765.00" x2="1097.17" y2="765.00" stroke="#8fa8c8" stroke-opacity="0.2" stroke-width="0.6"/>
<rect x="1086.00" y="773.25" width="11.17" height="8.25" fill="#44709c"/>
<line x1="1086.00" y1="773.25" x2="1097.17" y2="773.25" stroke="#8fa8c8" stroke-opacity="0.2" stroke-width="0.6"/>
<rect x="1086.00" y="781.50" width="11.17" height="8.25" fill="#44709c"/>
<line x1="1086.00" y1="781.50" x2="1097.17" y2="781.50" stroke="#8fa8c8" stroke-opacity="0.2" stroke-width="0.6"/>
<rect x="1086.00" y="789.75" width="11.17" height="8.25" fill="#44709c"/>
<line x1="1086.00" y1="789.75" x2="1097.17" y2="789.75" stroke="#8fa8c8" stroke-opacity="0.2" stroke-width="0.6"/>
<rect x="1086.00" y="798.00" width="11.17" height="8.25" fill="#44709c"/>
<line x1="1086.00" y1="798.00" x2="1097.17" y2="798.00" stroke="#8fa8c8" stroke-opacity="0.2" stroke-width="0.6"/>
<rect x="1086.00" y="806.25" width="11.17" height="8.25" fill="#44709c"/>
<line x1="1086.00" y1="806.25" x2="1097.17" y2="806.25" stroke="#8fa8c8" stroke-opacity="0.2" stroke-width="0.6"/>
<rect x="1086.00" y="814.50" width="11.17" height="8.25" fill="#44709c"/>
<line x1="1086.00" y1="814.50" x2="1097.17" y2="814.50" stroke="#8fa8c8" stroke-opacity="0.2" stroke-width="0.6"/>
<rect x="1086.00" y="822.75" width="11.17" height="8.25" fill="#44709c"/>
<line x1="1086.00" y1="822.75" x2="1097.17" y2="822.75" stroke="#8fa8c8" stroke-opacity="0.2" stroke-width="0.6"/>
<rect x="1086.00" y="839.25" width="11.17" height="8.25" fill="#44709c"/>
<rect x="1086.00" y="847.50" width="11.17" height="8.25" fill="#44709c"/>
<line x1="1086.00" y1="847.50" x2="1097.17" y2="847.50" stroke="#8fa8c8" stroke-opacity="0.2" stroke-width="0.6"/>
<rect x="1086.00" y="855.75" width="11.17" height="8.25" fill="#44709c"/>
<line x1="1086.00" y1="855.75" x2="1097.17" y2="855.75" stroke="#8fa8c8" stroke-opacity="0.2" stroke-width="0.6"/>
<rect x="1097.17" y="501.00" width="11.17" height="8.25" fill="#44709c"/>
<rect x="1097.17" y="509.25" width="11.17" height="8.25" fill="#3a6594"/>
<line x1="1097.17" y1="509.25" x2="1108.34" y2="509.25" stroke="#8fa8c8" stroke-opacity="0.2" stroke-width="0.6"/>
<rect x="1097.17" y="517.50" width="11.17" height="8.25" fill="#3a6594"/>
<line x1="1097.17" y1="517.50" x2="1108.34" y2="517.50" stroke="#8fa8c8" stroke-opacity="0.2" stroke-width="0.6"/>
<rect x="1097.17" y="525.75" width="11.17" height="8.25" fill="#3a6594"/>
<line x1="1097.17" y1="525.75" x2="1108.34" y2="525.75" stroke="#8fa8c8" stroke-opacity="0.2" stroke-width="0.6"/>
<rect x="1097.17" y="534.00" width="11.17" height="8.25" fill="#3a6594"/>
<line x1="1097.17" y1="534.00" x2="1108.34" y2="534.00" stroke="#8fa8c8" stroke-opacity="0.2" stroke-width="0.6"/>
<rect x="1097.17" y="542.25" width="11.17" height="8.25" fill="#3a6594"/>
<line x1="1097.17" y1="542.25" x2="1108.34" y2="542.25" stroke="#8fa8c8" stroke-opacity="0.2" stroke-width="0.6"/>
<rect x="1097.17" y="550.50" width="11.17" height="8.25" fill="#3a6594"/>
<line x1="1097.17" y1="550.50" x2="1108.34" y2="550.50" stroke="#8fa8c8" stroke-opacity="0.2" stroke-width="0.6"/>
<rect x="1097.17" y="558.75" width="11.17" height="8.25" fill="#3a6594"/>
<line x1="1097.17" y1="558.75" x2="1108.34" y2="558.75" stroke="#8fa8c8" stroke-opacity="0.2" stroke-width="0.6"/>
<rect x="1097.17" y="567.00" width="11.17" height="8.25" fill="#3a6594"/>
<line x1="1097.17" y1="567.00" x2="1108.34" y2="567.00" stroke="#8fa8c8" stroke-opacity="0.2" stroke-width="0.6"/>
<rect x="1097.17" y="575.25" width="11.17" height="8.25" fill="#3a6594"/>
<line x1="1097.17" y1="575.25" x2="1108.34" y2="575.25" stroke="#8fa8c8" stroke-opacity="0.2" stroke-width="0.6"/>
<rect x="1108.34" y="459.75" width="11.17" height="8.25" fill="#44709c"/>
<rect x="1108.34" y="468.00" width="11.17" height="8.25" fill="#375f8e"/>
<line x1="1108.34" y1="468.00" x2="1119.52" y2="468.00" stroke="#8fa8c8" stroke-opacity="0.2" stroke-width="0.6"/>
<rect x="1108.34" y="476.25" width="11.17" height="8.25" fill="#34598a"/>
<line x1="1108.34" y1="476.25" x2="1119.52" y2="476.25" stroke="#8fa8c8" stroke-opacity="0.2" stroke-width="0.6"/>
<rect x="1108.34" y="484.50" width="11.17" height="8.25" fill="#375f8e"/>
<line x1="1108.34" y1="484.50" x2="1119.52" y2="484.50" stroke="#8fa8c8" stroke-opacity="0.2" stroke-width="0.6"/>
<rect x="1108.34" y="492.75" width="11.17" height="8.25" fill="#3a6594"/>
<line x1="1108.34" y1="492.75" x2="1119.52" y2="492.75" stroke="#8fa8c8" stroke-opacity="0.2" stroke-width="0.6"/>
<rect x="1108.34" y="501.00" width="11.17" height="8.25" fill="#3c6696"/>
<line x1="1108.34" y1="501.00" x2="1119.52" y2="501.00" stroke="#8fa8c8" stroke-opacity="0.2" stroke-width="0.6"/>
<line x1="1108.34" y1="501.00" x2="1108.34" y2="509.25" stroke="#8fa8c8" stroke-opacity="0.15" stroke-width="0.6"/>
<rect x="1119.52" y="435.00" width="11.17" height="8.25" fill="#44709c"/>
<rect x="1119.52" y="443.25" width="11.17" height="8.25" fill="#213a68"/>
<line x1="1119.52" y1="443.25" x2="1130.69" y2="443.25" stroke="#8fa8c8" stroke-opacity="0.2" stroke-width="0.6"/>
<rect x="1119.52" y="451.50" width="11.17" height="8.25" fill="#2a4b7a"/>
<line x1="1119.52" y1="451.50" x2="1130.69" y2="451.50" stroke="#8fa8c8" stroke-opacity="0.2" stroke-width="0.6"/>
<rect x="1119.52" y="459.75" width="11.17" height="8.25" fill="#33598a"/>
<line x1="1119.52" y1="459.75" x2="1130.69" y2="459.75" stroke="#8fa8c8" stroke-opacity="0.2" stroke-width="0.6"/>
<line x1="1119.52" y1="459.75" x2="1119.52" y2="468.00" stroke="#8fa8c8" stroke-opacity="0.15" stroke-width="0.6"/>
<rect x="1130.69" y="418.50" width="11.17" height="8.25" fill="#3e6a98"/>
<rect x="1130.69" y="426.75" width="11.17" height="8.25" fill="#213a68"/>
<line x1="1130.69" y1="426.75" x2="1141.86" y2="426.75" stroke="#8fa8c8" stroke-opacity="0.2" stroke-width="0.6"/>
<rect x="1130.69" y="435.00" width="11.17" height="8.25" fill="#2e527f"/>
<line x1="1130.69" y1="435.00" x2="1141.86" y2="435.00" stroke="#8fa8c8" stroke-opacity="0.2" stroke-width="0.6"/>
<line x1="1130.69" y1="435.00" x2="1130.69" y2="443.25" stroke="#8fa8c8" stroke-opacity="0.15" stroke-width="0.6"/>
<rect x="1141.86" y="410.25" width="11.17" height="8.25" fill="#213a68"/>
<rect x="1141.86" y="418.50" width="11.17" height="8.25" fill="#25416e"/>
<line x1="1141.86" y1="418.50" x2="1153.03" y2="418.50" stroke="#8fa8c8" stroke-opacity="0.2" stroke-width="0.6"/>
<line x1="1141.86" y1="418.50" x2="1141.86" y2="426.75" stroke="#8fa8c8" stroke-opacity="0.15" stroke-width="0.6"/>
<rect x="1153.03" y="393.75" width="11.17" height="8.25" fill="#44709c"/>
<rect x="1153.03" y="402.00" width="11.17" height="8.25" fill="#131846"/>
<line x1="1153.03" y1="402.00" x2="1164.20" y2="402.00" stroke="#8fa8c8" stroke-opacity="0.2" stroke-width="0.6"/>
<rect x="1153.03" y="410.25" width="11.17" height="8.25" fill="#4370a0"/>
<line x1="1153.03" y1="410.25" x2="1164.20" y2="410.25" stroke="#8fa8c8" stroke-opacity="0.2" stroke-width="0.6"/>
<line x1="1153.03" y1="410.25" x2="1153.03" y2="418.50" stroke="#8fa8c8" stroke-opacity="0.15" stroke-width="0.6"/>
<rect x="1164.20" y="385.50" width="11.17" height="8.25" fill="#44709c"/>
<rect x="1164.20" y="393.75" width="11.17" height="8.25" fill="#0a0a36"/>
<line x1="1164.20" y1="393.75" x2="1175.38" y2="393.75" stroke="#8fa8c8" stroke-opacity="0.2" stroke-width="0.6"/>
<line x1="1164.20" y1="393.75" x2="1164.20" y2="402.00" stroke="#8fa8c8" stroke-opacity="0.15" stroke-width="0.6"/>
<rect x="1175.38" y="385.50" width="11.17" height="8.25" fill="#03012a"/>
<line x1="1175.38" y1="385.50" x2="1175.38" y2="393.75" stroke="#8fa8c8" stroke-opacity="0.15" stroke-width="0.6"/>
<rect x="1186.55" y="377.25" width="11.17" height="8.25" fill="#0e1040"/>
<rect x="1186.55" y="385.50" width="11.17" height="8.25" fill="#44709c"/>
<line x1="1186.55" y1="385.50" x2="1197.72" y2="385.50" stroke="#8fa8c8" stroke-opacity="0.2" stroke-width="0.6"/>
<line x1="1186.55" y1="385.50" x2="1186.55" y2="393.75" stroke="#8fa8c8" stroke-opacity="0.15" stroke-width="0.6"/>
<rect x="1197.72" y="369.00" width="11.17" height="8.25" fill="#213a68"/>
<rect x="1197.72" y="377.25" width="11.17" height="8.25" fill="#213a68"/>
<line x1="1197.72" y1="377.25" x2="1208.89" y2="377.25" stroke="#8fa8c8" stroke-opacity="0.2" stroke-width="0.6"/>
<line x1="1197.72" y1="377.25" x2="1197.72" y2="385.50" stroke="#8fa8c8" stroke-opacity="0.15" stroke-width="0.6"/>
<rect x="1208.89" y="369.00" width="11.17" height="8.25" fill="#03012a"/>
<line x1="1208.89" y1="369.00" x2="1208.89" y2="377.25" stroke="#8fa8c8" stroke-opacity="0.15" stroke-width="0.6"/>
<rect x="1220.06" y="360.75" width="11.17" height="8.25" fill="#131846"/>
<rect x="1220.06" y="369.00" width="11.17" height="8.25" fill="#3a6090"/>
<line x1="1220.06" y1="369.00" x2="1231.23" y2="369.00" stroke="#8fa8c8" stroke-opacity="0.2" stroke-width="0.6"/>
<line x1="1220.06" y1="369.00" x2="1220.06" y2="377.25" stroke="#8fa8c8" stroke-opacity="0.15" stroke-width="0.6"/>
<rect x="1231.23" y="360.75" width="11.17" height="8.25" fill="#03012a"/>
<line x1="1231.23" y1="360.75" x2="1231.23" y2="369.00" stroke="#8fa8c8" stroke-opacity="0.15" stroke-width="0.6"/>
<rect x="1242.41" y="352.50" width="11.17" height="8.25" fill="#44709c"/>
<rect x="1242.41" y="360.75" width="11.17" height="8.25" fill="#131846"/>
<line x1="1242.41" y1="360.75" x2="1253.58" y2="360.75" stroke="#8fa8c8" stroke-opacity="0.2" stroke-width="0.6"/>
<line x1="1242.41" y1="360.75" x2="1242.41" y2="369.00" stroke="#8fa8c8" stroke-opacity="0.15" stroke-width="0.6"/>
<rect x="1253.58" y="352.50" width="11.17" height="8.25" fill="#03012a"/>
<line x1="1253.58" y1="352.50" x2="1253.58" y2="360.75" stroke="#8fa8c8" stroke-opacity="0.15" stroke-width="0.6"/>
<rect x="1264.75" y="352.50" width="11.17" height="8.25" fill="#03012a"/>
<line x1="1264.75" y1="352.50" x2="1264.75" y2="360.75" stroke="#8fa8c8" stroke-opacity="0.15" stroke-width="0.6"/>
<rect x="1275.92" y="352.50" width="11.17" height="8.25" fill="#03012a"/>
<line x1="1275.92" y1="352.50" x2="1275.92" y2="360.75" stroke="#8fa8c8" stroke-opacity="0.15" stroke-width="0.6"/>
<rect x="1287.09" y="344.25" width="11.17" height="8.25" fill="#213a68"/>
<rect x="1287.09" y="352.50" width="11.17" height="8.25" fill="#2c507e"/>
<line x1="1287.09" y1="352.50" x2="1298.27" y2="352.50" stroke="#8fa8c8" stroke-opacity="0.2" stroke-width="0.6"/>
<line x1="1287.09" y1="352.50" x2="1287.09" y2="360.75" stroke="#8fa8c8" stroke-opacity="0.15" stroke-width="0.6"/>
<rect x="1298.27" y="344.25" width="11.17" height="8.25" fill="#03012a"/>
<line x1="1298.27" y1="344.25" x2="1298.27" y2="352.50" stroke="#8fa8c8" stroke-opacity="0.15" stroke-width="0.6"/>
<rect x="1309.44" y="344.25" width="11.17" height="8.25" fill="#03012a"/>
<line x1="1309.44" y1="344.25" x2="1309.44" y2="352.50" stroke="#8fa8c8" stroke-opacity="0.15" stroke-width="0.6"/>
<rect x="1320.61" y="344.25" width="11.17" height="8.25" fill="#03012a"/>
<line x1="1320.61" y1="344.25" x2="1320.61" y2="352.50" stroke="#8fa8c8" stroke-opacity="0.15" stroke-width="0.6"/>
<rect x="1331.78" y="344.25" width="11.17" height="8.25" fill="#03012a"/>
<line x1="1331.78" y1="344.25" x2="1331.78" y2="352.50" stroke="#8fa8c8" stroke-opacity="0.15" stroke-width="0.6"/>
<rect x="1342.95" y="344.25" width="11.17" height="8.25" fill="#03012a"/>
<line x1="1342.95" y1="344.25" x2="1342.95" y2="352.50" stroke="#8fa8c8" stroke-opacity="0.15" stroke-width="0.6"/>
<rect x="1354.12" y="336.00" width="11.17" height="8.25" fill="#44709c"/>
<rect x="1354.12" y="344.25" width="11.17" height="8.25" fill="#121640"/>
<line x1="1354.12" y1="344.25" x2="1365.30" y2="344.25" stroke="#8fa8c8" stroke-opacity="0.2" stroke-width="0.6"/>
<line x1="1354.12" y1="344.25" x2="1354.12" y2="352.50" stroke="#8fa8c8" stroke-opacity="0.15" stroke-width="0.6"/>
<rect x="1365.30" y="336.00" width="11.17" height="8.25" fill="#03012a"/>
<line x1="1365.30" y1="336.00" x2="1365.30" y2="344.25" stroke="#8fa8c8" stroke-opacity="0.15" stroke-width="0.6"/>
<rect x="1376.47" y="336.00" width="11.17" height="8.25" fill="#03012a"/>
<line x1="1376.47" y1="336.00" x2="1376.47" y2="344.25" stroke="#8fa8c8" stroke-opacity="0.15" stroke-width="0.6"/>
<rect x="1387.64" y="336.00" width="11.17" height="8.25" fill="#03012a"/>
<line x1="1387.64" y1="336.00" x2="1387.64" y2="344.25" stroke="#8fa8c8" stroke-opacity="0.15" stroke-width="0.6"/>
<rect x="1398.81" y="336.00" width="11.17" height="8.25" fill="#03012a"/>
<line x1="1398.81" y1="336.00" x2="1398.81" y2="344.25" stroke="#8fa8c8" stroke-opacity="0.15" stroke-width="0.6"/>
<rect x="1409.98" y="336.00" width="11.17" height="8.25" fill="#03012a"/>
<line x1="1409.98" y1="336.00" x2="1409.98" y2="344.25" stroke="#8fa8c8" stroke-opacity="0.15" stroke-width="0.6"/>
<rect x="1421.16" y="336.00" width="11.17" height="8.25" fill="#03012a"/>
<line x1="1421.16" y1="336.00" x2="1421.16" y2="344.25" stroke="#8fa8c8" stroke-opacity="0.15" stroke-width="0.6"/>
<rect x="1432.33" y="336.00" width="11.17" height="8.25" fill="#03012a"/>
<line x1="1432.33" y1="336.00" x2="1432.33" y2="344.25" stroke="#8fa8c8" stroke-opacity="0.15" stroke-width="0.6"/>
<rect x="1443.50" y="336.00" width="11.17" height="8.25" fill="#03012a"/>
<line x1="1443.50" y1="336.00" x2="1443.50" y2="344.25" stroke="#8fa8c8" stroke-opacity="0.15" stroke-width="0.6"/>
<rect x="1454.67" y="336.00" width="11.17" height="8.25" fill="#03012a"/>
<line x1="1454.67" y1="336.00" x2="1454.67" y2="344.25" stroke="#8fa8c8" stroke-opacity="0.15" stroke-width="0.6"/>
<rect x="1465.84" y="336.00" width="11.17" height="8.25" fill="#03012a"/>
<line x1="1465.84" y1="336.00" x2="1465.84" y2="344.25" stroke="#8fa8c8" stroke-opacity="0.15" stroke-width="0.6"/>
<rect x="1477.02" y="336.00" width="11.17" height="8.25" fill="#03012a"/>
<line x1="1477.02" y1="336.00" x2="1477.02" y2="344.25" stroke="#8fa8c8" stroke-opacity="0.15" stroke-width="0.6"/>
<rect x="1488.19" y="336.00" width="11.17" height="8.25" fill="#03012a"/>
<line x1="1488.19" y1="336.00" x2="1488.19" y2="344.25" stroke="#8fa8c8" stroke-opacity="0.15" stroke-width="0.6"/>
<rect x="1499.36" y="336.00" width="11.17" height="8.25" fill="#03012a"/>
<line x1="1499.36" y1="336.00" x2="1499.36" y2="344.25" stroke="#8fa8c8" stroke-opacity="0.15" stroke-width="0.6"/>
<rect x="1510.53" y="336.00" width="11.17" height="8.25" fill="#03012a"/>
<line x1="1510.53" y1="336.00" x2="1510.53" y2="344.25" stroke="#8fa8c8" stroke-opacity="0.15" stroke-width="0.6"/>
<rect x="1521.70" y="336.00" width="11.17" height="8.25" fill="#03012a"/>
<line x1="1521.70" y1="336.00" x2="1521.70" y2="344.25" stroke="#8fa8c8" stroke-opacity="0.15" stroke-width="0.6"/>
<rect x="1532.88" y="336.00" width="11.17" height="8.25" fill="#03012a"/>
<line x1="1532.88" y1="336.00" x2="1532.88" y2="344.25" stroke="#8fa8c8" stroke-opacity="0.15" stroke-width="0.6"/>
<rect x="1544.05" y="336.00" width="11.17" height="8.25" fill="#03012a"/>
<line x1="1544.05" y1="336.00" x2="1544.05" y2="344.25" stroke="#8fa8c8" stroke-opacity="0.15" stroke-width="0.6"/>
<rect x="1555.22" y="336.00" width="11.17" height="8.25" fill="#03012a"/>
<line x1="1555.22" y1="336.00" x2="1555.22" y2="344.25" stroke="#8fa8c8" stroke-opacity="0.15" stroke-width="0.6"/>
<rect x="1566.39" y="336.00" width="11.17" height="8.25" fill="#03012a"/>
<line x1="1566.39" y1="336.00" x2="1566.39" y2="344.25" stroke="#8fa8c8" stroke-opacity="0.15" stroke-width="0.6"/>
<rect x="1577.56" y="336.00" width="11.17" height="8.25" fill="#03012a"/>
<line x1="1577.56" y1="336.00" x2="1577.56" y2="344.25" stroke="#8fa8c8" stroke-opacity="0.15" stroke-width="0.6"/>
<rect x="1588.73" y="336.00" width="11.17" height="8.25" fill="#03012a"/>
<line x1="1588.73" y1="336.00" x2="1588.73" y2="344.25" stroke="#8fa8c8" stroke-opacity="0.15" stroke-width="0.6"/>
<rect x="1599.91" y="336.00" width="11.17" height="8.25" fill="#03012a"/>
<line x1="1599.91" y1="336.00" x2="1599.91" y2="344.25" stroke="#8fa8c8" stroke-opacity="0.15" stroke-width="0.6"/>
<rect x="1611.08" y="336.00" width="11.17" height="8.25" fill="#03012a"/>
<line x1="1611.08" y1="336.00" x2="1611.08" y2="344.25" stroke="#8fa8c8" stroke-opacity="0.15" stroke-width="0.6"/>
<rect x="1622.25" y="336.00" width="11.17" height="8.25" fill="#03012a"/>
<line x1="1622.25" y1="336.00" x2="1622.25" y2="344.25" stroke="#8fa8c8" stroke-opacity="0.15" stroke-width="0.6"/>
<rect x="1633.42" y="336.00" width="11.17" height="8.25" fill="#03012a"/>
<line x1="1633.42" y1="336.00" x2="1633.42" y2="344.25" stroke="#8fa8c8" stroke-opacity="0.15" stroke-width="0.6"/>
<rect x="1644.59" y="336.00" width="11.17" height="8.25" fill="#03012a"/>
<line x1="1644.59" y1="336.00" x2="1644.59" y2="344.25" stroke="#8fa8c8" stroke-opacity="0.15" stroke-width="0.6"/>
<rect x="1655.77" y="336.00" width="11.17" height="8.25" fill="#03012a"/>
<line x1="1655.77" y1="336.00" x2="1655.77" y2="344.25" stroke="#8fa8c8" stroke-opacity="0.15" stroke-width="0.6"/>
<rect x="1666.94" y="336.00" width="11.17" height="8.25" fill="#03012a"/>
<line x1="1666.94" y1="336.00" x2="1666.94" y2="344.25" stroke="#8fa8c8" stroke-opacity="0.15" stroke-width="0.6"/>
<rect x="1678.11" y="336.00" width="11.17" height="8.25" fill="#03012a"/>
<line x1="1678.11" y1="336.00" x2="1678.11" y2="344.25" stroke="#8fa8c8" stroke-opacity="0.15" stroke-width="0.6"/>
<rect x="1689.28" y="336.00" width="11.17" height="8.25" fill="#03012a"/>
<line x1="1689.28" y1="336.00" x2="1689.28" y2="344.25" stroke="#8fa8c8" stroke-opacity="0.15" stroke-width="0.6"/>
<rect x="1700.45" y="336.00" width="11.17" height="8.25" fill="#03012a"/>
<line x1="1700.45" y1="336.00" x2="1700.45" y2="344.25" stroke="#8fa8c8" stroke-opacity="0.15" stroke-width="0.6"/>
<rect x="1711.62" y="336.00" width="11.17" height="8.25" fill="#03012a"/>
<line x1="1711.62" y1="336.00" x2="1711.62" y2="344.25" stroke="#8fa8c8" stroke-opacity="0.15" stroke-width="0.6"/>
<rect x="1722.80" y="336.00" width="11.17" height="8.25" fill="#03012a"/>
<line x1="1722.80" y1="336.00" x2="1722.80" y2="344.25" stroke="#8fa8c8" stroke-opacity="0.15" stroke-width="0.6"/>
<rect x="1733.97" y="336.00" width="11.17" height="8.25" fill="#03012a"/>
<line x1="1733.97" y1="336.00" x2="1733.97" y2="344.25" stroke="#8fa8c8" stroke-opacity="0.15" stroke-width="0.6"/>
<rect x="1745.14" y="336.00" width="11.17" height="8.25" fill="#03012a"/>
<line x1="1745.14" y1="336.00" x2="1745.14" y2="344.25" stroke="#8fa8c8" stroke-opacity="0.15" stroke-width="0.6"/>
<rect x="1756.31" y="336.00" width="11.17" height="8.25" fill="#03012a"/>
<line x1="1756.31" y1="336.00" x2="1756.31" y2="344.25" stroke="#8fa8c8" stroke-opacity="0.15" stroke-width="0.6"/>
<rect x="1767.48" y="336.00" width="11.17" height="8.25" fill="#03012a"/>
<line x1="1767.48" y1="336.00" x2="1767.48" y2="344.25" stroke="#8fa8c8" stroke-opacity="0.15" stroke-width="0.6"/>
<rect x="1778.66" y="336.00" width="11.17" height="8.25" fill="#03012a"/>
<line x1="1778.66" y1="336.00" x2="1778.66" y2="344.25" stroke="#8fa8c8" stroke-opacity="0.15" stroke-width="0.6"/>
<rect x="1789.83" y="336.00" width="11.17" height="8.25" fill="#03012a"/>
<line x1="1789.83" y1="336.00" x2="1789.83" y2="344.25" stroke="#8fa8c8" stroke-opacity="0.15" stroke-width="0.6"/>
</svg>
<div class="t" style="left:1000px;top:888.5px;width:70px;text-align:right;font-family:'Liberation Mono';font-size:15px;color:#595959"><span style="display:inline-block;transform:scaleX(0.87);transform-origin:right center">0,0%</span></div>
<div class="t" style="left:1045.0px;top:920px;width:80px;text-align:center;font-family:'Liberation Mono';font-size:15px;color:#595959"><span style="display:inline-block;transform:scaleX(0.86)">0,0%</span></div>
<div class="t" style="left:1000px;top:776.3px;width:70px;text-align:right;font-family:'Liberation Mono';font-size:15px;color:#595959"><span style="display:inline-block;transform:scaleX(0.87);transform-origin:right center">20,0%</span></div>
<div class="t" style="left:1188.0px;top:920px;width:80px;text-align:center;font-family:'Liberation Mono';font-size:15px;color:#595959"><span style="display:inline-block;transform:scaleX(0.86)">20,0%</span></div>
<div class="t" style="left:1000px;top:664.1px;width:70px;text-align:right;font-family:'Liberation Mono';font-size:15px;color:#595959"><span style="display:inline-block;transform:scaleX(0.87);transform-origin:right center">40,0%</span></div>
<div class="t" style="left:1331.0px;top:920px;width:80px;text-align:center;font-family:'Liberation Mono';font-size:15px;color:#595959"><span style="display:inline-block;transform:scaleX(0.86)">40,0%</span></div>
<div class="t" style="left:1000px;top:551.9px;width:70px;text-align:right;font-family:'Liberation Mono';font-size:15px;color:#595959"><span style="display:inline-block;transform:scaleX(0.87);transform-origin:right center">60,0%</span></div>
<div class="t" style="left:1474.0px;top:920px;width:80px;text-align:center;font-family:'Liberation Mono';font-size:15px;color:#595959"><span style="display:inline-block;transform:scaleX(0.86)">60,0%</span></div>
<div class="t" style="left:1000px;top:439.7px;width:70px;text-align:right;font-family:'Liberation Mono';font-size:15px;color:#595959"><span style="display:inline-block;transform:scaleX(0.87);transform-origin:right center">80,0%</span></div>
<div class="t" style="left:1617.0px;top:920px;width:80px;text-align:center;font-family:'Liberation Mono';font-size:15px;color:#595959"><span style="display:inline-block;transform:scaleX(0.86)">80,0%</span></div>
<div class="t" style="left:1000px;top:327.5px;width:70px;text-align:right;font-family:'Liberation Mono';font-size:15px;color:#595959"><span style="display:inline-block;transform:scaleX(0.87);transform-origin:right center">100,0%</span></div>
<div class="t" style="left:1760.0px;top:920px;width:80px;text-align:center;font-family:'Liberation Mono';font-size:15px;color:#595959"><span style="display:inline-block;transform:scaleX(0.86)">100,0%</span></div>
<div class="t" style="left:1401px;top:942px;font-size:16.8px;color:#595959">% позиций</div>
<div class="t" style="left:978.5px;top:616px;font-size:16.3px;color:#595959;transform:translate(-50%,-50%) rotate(-90deg);transform-origin:center">Накопительный %</div>
<div class="t" style="left:1841px;top:427.5px;font-size:17px;color:#f5461c">B</div>
<svg class="abs" style="left:1854px;top:434.0px" width="18" height="10" viewBox="0 0 18 10"><path d="M1 4.5 H16 M12 1 L16.5 4.5 L12 8" stroke="#f5461c" stroke-width="1.3" fill="none"/></svg>
<div class="t" style="left:1872.5px;top:427.5px;font-size:17px;color:#f5461c">C</div>
<div class="t" style="left:1811.5px;top:450.0px;width:100px;text-align:center;font-size:17px;color:#f5461c"><span style="display:inline-block;transform:scaleX(0.95)">(80,0%)</span></div>
<div class="t" style="left:1841px;top:597.0px;font-size:17px;color:#2a7a2c">A</div>
<svg class="abs" style="left:1854px;top:603.5px" width="18" height="10" viewBox="0 0 18 10"><path d="M1 4.5 H16 M12 1 L16.5 4.5 L12 8" stroke="#2a7a2c" stroke-width="1.3" fill="none"/></svg>
<div class="t" style="left:1872.5px;top:597.0px;font-size:17px;color:#2a7a2c">B</div>
<div class="t" style="left:1811.5px;top:619.5px;width:100px;text-align:center;font-size:17px;color:#2a7a2c"><span style="display:inline-block;transform:scaleX(0.95)">(50,0%)</span></div>
<div class="t" style="left:967px;top:966px;font-style:italic;font-size:16px;color:#7f7f7f">* Providing overview of 4.6k dimension values.</div>
</body></html>
